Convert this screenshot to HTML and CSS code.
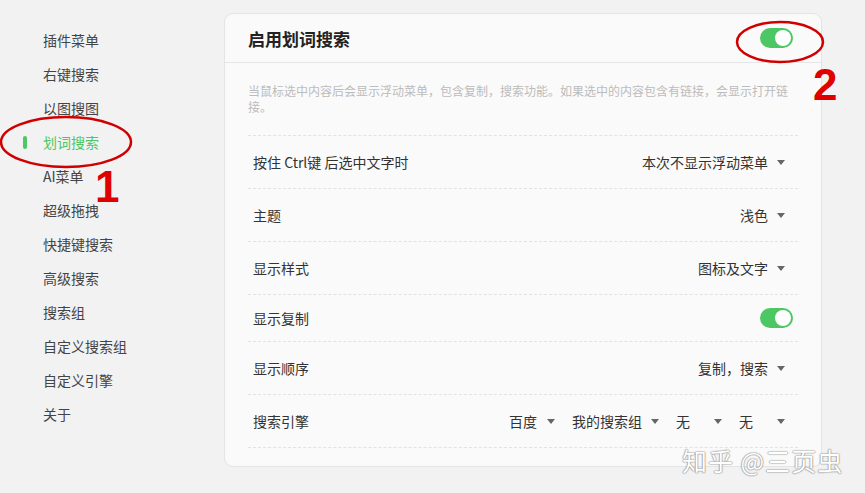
FILE: index.html
```
<!DOCTYPE html>
<html>
    <head>
        <meta charset="utf-8">
        <title>划词搜索</title>
        <link rel="stylesheet" href="styles.css">
    </head>
    <body>
        <div class="page">
            <ul class="nav">
                <li>插件菜单</li>
                <li>右键搜索</li>
                <li>以图搜图</li>
                <li class="active">划词搜索</li>
                <li>AI菜单</li>
                <li>超级拖拽</li>
                <li>快捷键搜索</li>
                <li>高级搜索</li>
                <li>搜索组</li>
                <li>自定义搜索组</li>
                <li>自定义引擎</li>
                <li>关于</li>
            </ul>

            <div class="card">
                <div class="card-head">
                    <h2>启用划词搜索</h2>
                    <span class="switch on"></span>
                </div>
                <div class="card-body">
                    <p class="desc">当鼠标选中内容后会显示浮动菜单，包含复制，搜索功能。如果选中的内容包含有链接，会显示打开链接。</p>
                    <div class="row">
                        <span class="label">按住 Ctrl键 后选中文字时</span>
                        <span class="select">本次不显示浮动菜单<i class="caret"></i></span>
                    </div>
                    <div class="row">
                        <span class="label">主题</span>
                        <span class="select">浅色<i class="caret"></i></span>
                    </div>
                    <div class="row">
                        <span class="label">显示样式</span>
                        <span class="select">图标及文字<i class="caret"></i></span>
                    </div>
                    <div class="row short">
                        <span class="label">显示复制</span>
                        <span class="switch on"></span>
                    </div>
                    <div class="row">
                        <span class="label">显示顺序</span>
                        <span class="select">复制，搜索<i class="caret"></i></span>
                    </div>
                    <div class="row">
                        <span class="label">搜索引擎</span>
                        <div class="selects">
                            <span class="select fixed">百度<i class="caret"></i></span>
                            <span class="select fixed">我的搜索组<i class="caret"></i></span>
                            <span class="select fixed">无<i class="caret"></i></span>
                            <span class="select fixed">无<i class="caret"></i></span>
                        </div>
                    </div>
                </div>
            </div>
        </div>

        <!-- screenshot annotations -->
        <svg class="marks" width="865" height="493" viewBox="0 0 865 493">
            <ellipse cx="66" cy="142" rx="65" ry="25" fill="none" stroke="#d10000" stroke-width="2.5"/>
            <ellipse cx="780" cy="42" rx="43" ry="20" fill="none" stroke="#d10000" stroke-width="2.5"/>
        </svg>
        <span class="num num-1">1</span>
        <span class="num num-2">2</span>

        <div class="watermark">知乎 @三页虫</div>
    </body>
</html>
```

FILE: styles.css
```
body {
    margin: 0;
    width: 865px;
    height: 493px;
    overflow: hidden;
    background: #f2f2f2;
    color: #333;
    font-family: "Microsoft YaHei", "Noto Sans CJK SC", "Noto Sans", sans-serif;
    font-size: 14px;
    position: relative;
}

.page {
    display: flex;
    align-items: flex-start;
}

.nav {
    list-style: none;
    margin: 0;
    padding: 23px 0 0 0;
    width: 224px;
    flex: none;
}

.nav li {
    position: relative;
    height: 34px;
    line-height: 34px;
    padding-left: 43px;
    color: #444;
}

.nav li.active {
    color: #4cc764;
}

.nav li.active::before {
    content: "";
    position: absolute;
    left: 23px;
    top: 11px;
    width: 4px;
    height: 13px;
    border-radius: 2px;
    background: #4cc764;
}

.card {
    margin-top: 13px;
    width: 596px;
    height: 452px;
    background: #fafafa;
    border: 1px solid #e4e4e4;
    border-radius: 9px;
}

.card-head {
    display: flex;
    align-items: center;
    justify-content: space-between;
    height: 48px;
    padding: 0 28px 0 23px;
    border-bottom: 1px solid #e6e6e6;
}

.card-head h2 {
    margin: 0;
    font-size: 17px;
    font-weight: 700;
    color: #222;
}

.card-body {
    padding: 0 23px;
}

.desc {
    margin: 20px 0 20px;
    font-size: 12px;
    line-height: 16px;
    color: #bcbcbc;
}

.row {
    display: flex;
    align-items: center;
    justify-content: space-between;
    height: 52px;
    padding: 0 5px;
    border-top: 1px dashed #e2e2e2;
}

.row:last-child {
    border-bottom: 1px dashed #e2e2e2;
}

.row.short {
    height: 46px;
}

.label {
    color: #333;
}

.select {
    display: flex;
    align-items: center;
    gap: 9px;
    margin-right: 8px;
    color: #333;
}

.selects {
    display: flex;
    gap: 17px;
    margin-right: 8px;
}

.selects .select {
    margin-right: 0;
}

.select.fixed {
    justify-content: space-between;
    min-width: 46px;
}

.caret {
    width: 0;
    height: 0;
    border-left: 4px solid transparent;
    border-right: 4px solid transparent;
    border-top: 5px solid #666;
}

.switch {
    position: relative;
    display: inline-block;
    width: 33px;
    height: 20px;
    border-radius: 10px;
    background: #4cc764;
}

.switch::after {
    content: "";
    position: absolute;
    top: 2px;
    right: 2px;
    width: 16px;
    height: 16px;
    border-radius: 50%;
    background: #fff;
}

.marks {
    position: absolute;
    left: 0;
    top: 0;
    pointer-events: none;
}

.num {
    position: absolute;
    color: #e00000;
    font-family: "Liberation Sans", Arial, sans-serif;
    font-weight: 700;
    font-size: 44px;
    line-height: 1;
}

.num-1 {
    left: 95px;
    top: 165px;
}

.num-2 {
    left: 813px;
    top: 63px;
}

.watermark {
    position: absolute;
    left: 682px;
    top: 442px;
    font-size: 25px;
    color: #fff;
    letter-spacing: 1px;
    text-shadow: 0 0 1px #888, 0 0 1px #888, 0 0 2px #999;
}
```
